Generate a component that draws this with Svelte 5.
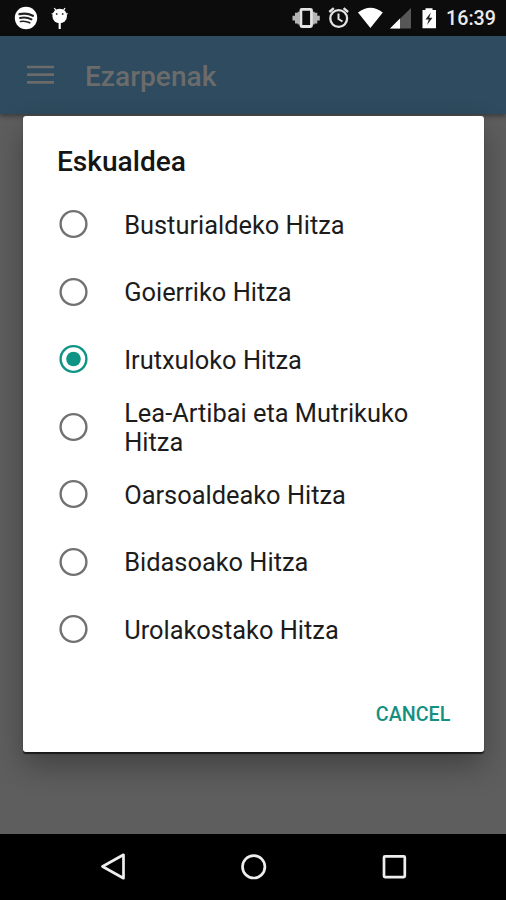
<script>
  const options = [
    'Busturialdeko Hitza',
    'Goierriko Hitza',
    'Irutxuloko Hitza',
    'Lea-Artibai eta Mutrikuko Hitza',
    'Oarsoaldeako Hitza',
    'Bidasoako Hitza',
    'Urolakostako Hitza'
  ];
  let selected = $state(2);
</script>

<div class="screen">
  <header class="status">
    <svg class="notifications" width="80" height="36" viewBox="0 0 80 36">
      <circle cx="26" cy="18" r="11.2" fill="#fff" />
      <g fill="none" stroke="#222" stroke-linecap="round">
        <path d="M19.5 14.2q7-1.8 13.4 1.6" stroke-width="2.3" />
        <path d="M20 18q6-1.5 11.5 1.4" stroke-width="1.9" />
        <path d="M20.5 21.5q5-1 9.3 1.3" stroke-width="1.6" />
      </g>
      <path d="M56 10.5 54.3 8M63.400 10.5l1.600-2.500" stroke="#fff" stroke-width="1.3" />
      <circle cx="59.700" cy="16" r="7.300" fill="#fff" />
      <path d="M51.700 13.500l2 1M67.700 13.500l-2 1" stroke="#fff" stroke-width="1.200" />
      <path d="M58.600 22h2.200v7h-2.200Z" fill="#fff" />
      <circle cx="56.700" cy="14" r=".9" fill="#333" /><circle cx="62.700" cy="14" r=".9" fill="#333" />
    </svg>
    <svg class="indicators" width="150" height="36" viewBox="290 0 150 36">
      <path d="M292.500 15.800h2.500v-3h2.700v-1h2v12.700h-2v-1H295v-3h-2.500ZM319.800 15.800h-2.500v-3h-2.700v-1h-2v12.700h2v-1h2.700v-3h2.500Z" fill="#b5b5b5" />
      <rect x="300.900" y="9.300" width="10.600" height="17.200" rx="1" fill="#0c0c0c" stroke="#e4e4e4" stroke-width="2.800" />
      <g fill="none" stroke="#e4e4e4">
        <circle cx="338.700" cy="18.500" r="8.400" stroke-width="2.300" />
        <path d="M338.500 13.500v5.500l4 2.500" stroke-width="2" />
        <path d="m329.300 12 4.500-3.800M348.100 12l-4.500-3.800" stroke-width="2.300" />
      </g>
      <path d="M358 12.500q12.400-9.500 24.800 0L370.400 28Z" fill="#fff" />
      <path d="M411 8v20.500h-21Z" fill="#575757" />
      <path d="M400 18.500v10h-10Z" fill="#fff" />
      <path d="M425.500 8.200h7V10h3.500v18.200h-13.500V10h3Z" fill="#fff" />
      <path d="m430.800 12.500-5.300 7h3.300l-1.800 5.500 5.500-7.300h-3.300Z" fill="#222" />
    </svg>
    <span class="time">16:39</span>
  </header>

  <div class="appbar">
    <svg width="27" height="20" viewBox="0 0 27 20">
      <path d="M0 2h27M0 9.700h27M0 17.400h27" stroke="#6b6b6b" stroke-width="2.700" />
    </svg>
    <h1>Ezarpenak</h1>
  </div>

  <main>
    <section class="dialog" role="dialog" aria-labelledby="dialog-title">
      <h2 id="dialog-title">Eskualdea</h2>
      <div class="options" role="radiogroup" aria-labelledby="dialog-title">
        {#each options as option, i}
          <button class="option" role="radio" aria-checked={selected === i} onclick={() => (selected = i)}>
            <svg class="radio" class:checked={selected === i} width="30" height="30" viewBox="0 0 30 30">
              <circle cx="15.500" cy="15" r="12.900" fill="none" stroke="currentColor" stroke-width="2.400" />
              {#if selected === i}<circle cx="15.500" cy="15" r="7.300" fill="currentColor" />{/if}
            </svg>
            <span>{option}</span>
          </button>
        {/each}
      </div>
      <button class="cancel">CANCEL</button>
    </section>
  </main>

  <nav>
    <svg width="506" height="66" viewBox="0 834 506 66" fill="none" stroke="#eee" stroke-width="2.700" stroke-linejoin="round">
      <path d="M102.500 866.500 123.500 854.800v23.400Z" />
      <circle cx="253.700" cy="866.800" r="11.200" />
      <rect x="384" y="856.300" width="20.800" height="20.800" rx="1" />
    </svg>
  </nav>
</div>

<style>
  :global(body) { margin: 0; background: #000; }
  .screen {
    width: 506px;
    height: 900px;
    display: flex;
    flex-direction: column;
    overflow: hidden;
    background: #5e5e5e;
    font-family: Roboto, sans-serif;
  }
  .status {
    height: 36px;
    flex: none;
    display: flex;
    align-items: center;
    background: #0c0c0c;
    color: #eaeaea;
  }
  svg { display: block; flex: none; }
  .indicators { margin-left: 210px; }
  .time { margin-left: 6px; font-size: 19.700px; font-weight: 500; line-height: 36px; padding-top: 2px; }
  .appbar {
    height: 78px;
    flex: none;
    display: flex;
    align-items: center;
    padding-left: 26.500px;
    background: #2e4b5f;
    box-shadow: 0 2px 5px rgba(0, 0, 0, .4);
  }
  h1 { margin: 3px 0 0 31.500px; font-size: 28.100px; line-height: 34px; font-weight: 500; color: #6b6b6b; }
  main { flex: 1; padding: 1.500px 21.700px 0 22.500px; }
  .dialog {
    box-sizing: border-box;
    height: 636.500px;
    display: flex;
    flex-direction: column;
    border-radius: 3px;
    background: #fff;
    box-shadow: 0 1.500px 1px rgba(0, 0, 0, .65), 0 14px 30px rgba(0, 0, 0, .3);
  }
  h2 { margin: 29px 0 13px 34.500px; font-size: 28.100px; line-height: 33px; font-weight: 500; color: #151515; }
  .options { display: flex; flex-direction: column; }
  button { border: 0; padding: 0; background: none; font-family: inherit; }
  .option {
    height: 67.500px;
    display: flex;
    align-items: center;
    gap: 36px;
    padding: 0 50px 0 35.700px;
    color: #1c1c1c;
    font-size: 25.400px;
    line-height: 29.600px;
    text-align: left;
  }
  .option span { padding-top: 3px; }
  .radio { color: #717171; }
  .radio.checked { color: #0d9484; }
  .cancel {
    align-self: flex-end;
    margin: 38.700px 34px 0 0;
    color: #159080;
    font-size: 19.700px;
    font-weight: 500;
    line-height: 26px;
  }
  nav { height: 66px; flex: none; background: #000; }
</style>
